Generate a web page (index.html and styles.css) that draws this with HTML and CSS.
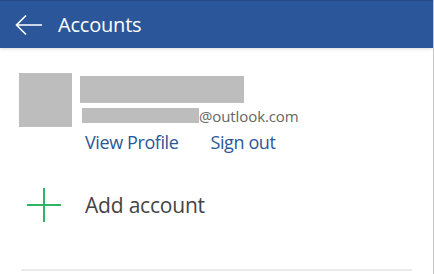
FILE: index.html
```html
<!DOCTYPE html>
<html lang="en">
<head>
    <meta charset="UTF-8">
    <meta name="viewport" content="width=device-width, initial-scale=1.0">
    <title>Accounts</title>
    <link rel="stylesheet" href="styles.css">
</head>
<body>
    <div class="app">
        <header class="topbar">
            <svg class="back" width="28" height="22" viewBox="0 0 28 22">
                <path d="M27 11H2M11 1.5L1.5 11L11 20.5" fill="none" stroke="#fff" stroke-width="1.6"/>
            </svg>
            <h1>Accounts</h1>
        </header>

        <div class="account">
            <div class="avatar"></div>
            <div class="info">
                <div class="name-bar"></div>
                <div class="email">
                    <span class="email-bar"></span><span class="domain">@outlook.com</span>
                </div>
            </div>
        </div>
        <div class="links">
            <a href="#">View Profile</a>
            <a href="#">Sign out</a>
        </div>

        <div class="add-row">
            <svg class="plus" width="36" height="36" viewBox="0 0 36 36">
                <path d="M18 1V35M1 18H35" stroke="#2fb364" stroke-width="2"/>
            </svg>
            <span>Add account</span>
        </div>
        <div class="divider"></div>
    </div>
</body>
</html>
```

FILE: styles.css
```css
body {
    margin: 0;
    font-family: "Open Sans", "Noto Sans", sans-serif;
    background-color: #fff;
    overflow: hidden;
}
.app {
    width: 433px;
    height: 274px;
    border-right: 1px solid #c6c6c6;
    overflow: hidden;
}
.topbar {
    height: 48px;
    background-color: #2b579a;
    border-top: 1px solid #244a85;
    box-sizing: border-box;
    display: flex;
    align-items: center;
    padding-left: 15px;
    box-shadow: 0 1px 3px rgba(0, 0, 0, 0.15);
}
.back {
    margin-right: 15px;
}
.topbar h1 {
    margin: 0;
    font-size: 20px;
    font-weight: normal;
    color: #fff;
    letter-spacing: -0.2px;
}
.account {
    display: flex;
    padding: 25px 0 0 19px;
}
.avatar {
    width: 53px;
    height: 54px;
    background-color: #bdbdbd;
}
.info {
    margin-left: 8px;
    padding-top: 3px;
}
.name-bar {
    width: 164px;
    height: 27px;
    background-color: #bdbdbd;
}
.email {
    display: flex;
    align-items: center;
    margin-top: 5px;
    margin-left: 2px;
    height: 15px;
}
.email-bar {
    width: 117px;
    height: 15px;
    background-color: #bdbdbd;
}
.domain {
    font-size: 15px;
    color: #666;
    letter-spacing: -0.1px;
}
.links {
    display: flex;
    gap: 32px;
    padding-left: 85px;
    margin-top: 3px;
}
.links a {
    color: #2b579a;
    text-decoration: none;
    font-size: 18px;
    letter-spacing: -0.4px;
}
.add-row {
    display: flex;
    align-items: center;
    padding-left: 26px;
    margin-top: 33px;
    height: 36px;
}
.plus {
    margin-right: 23px;
}
.add-row span {
    font-size: 21px;
    color: #444;
    letter-spacing: -0.2px;
}
.divider {
    margin: 46px 0 0 21px;
    width: 391px;
    height: 2px;
    background-color: #ebebeb;
}
```
